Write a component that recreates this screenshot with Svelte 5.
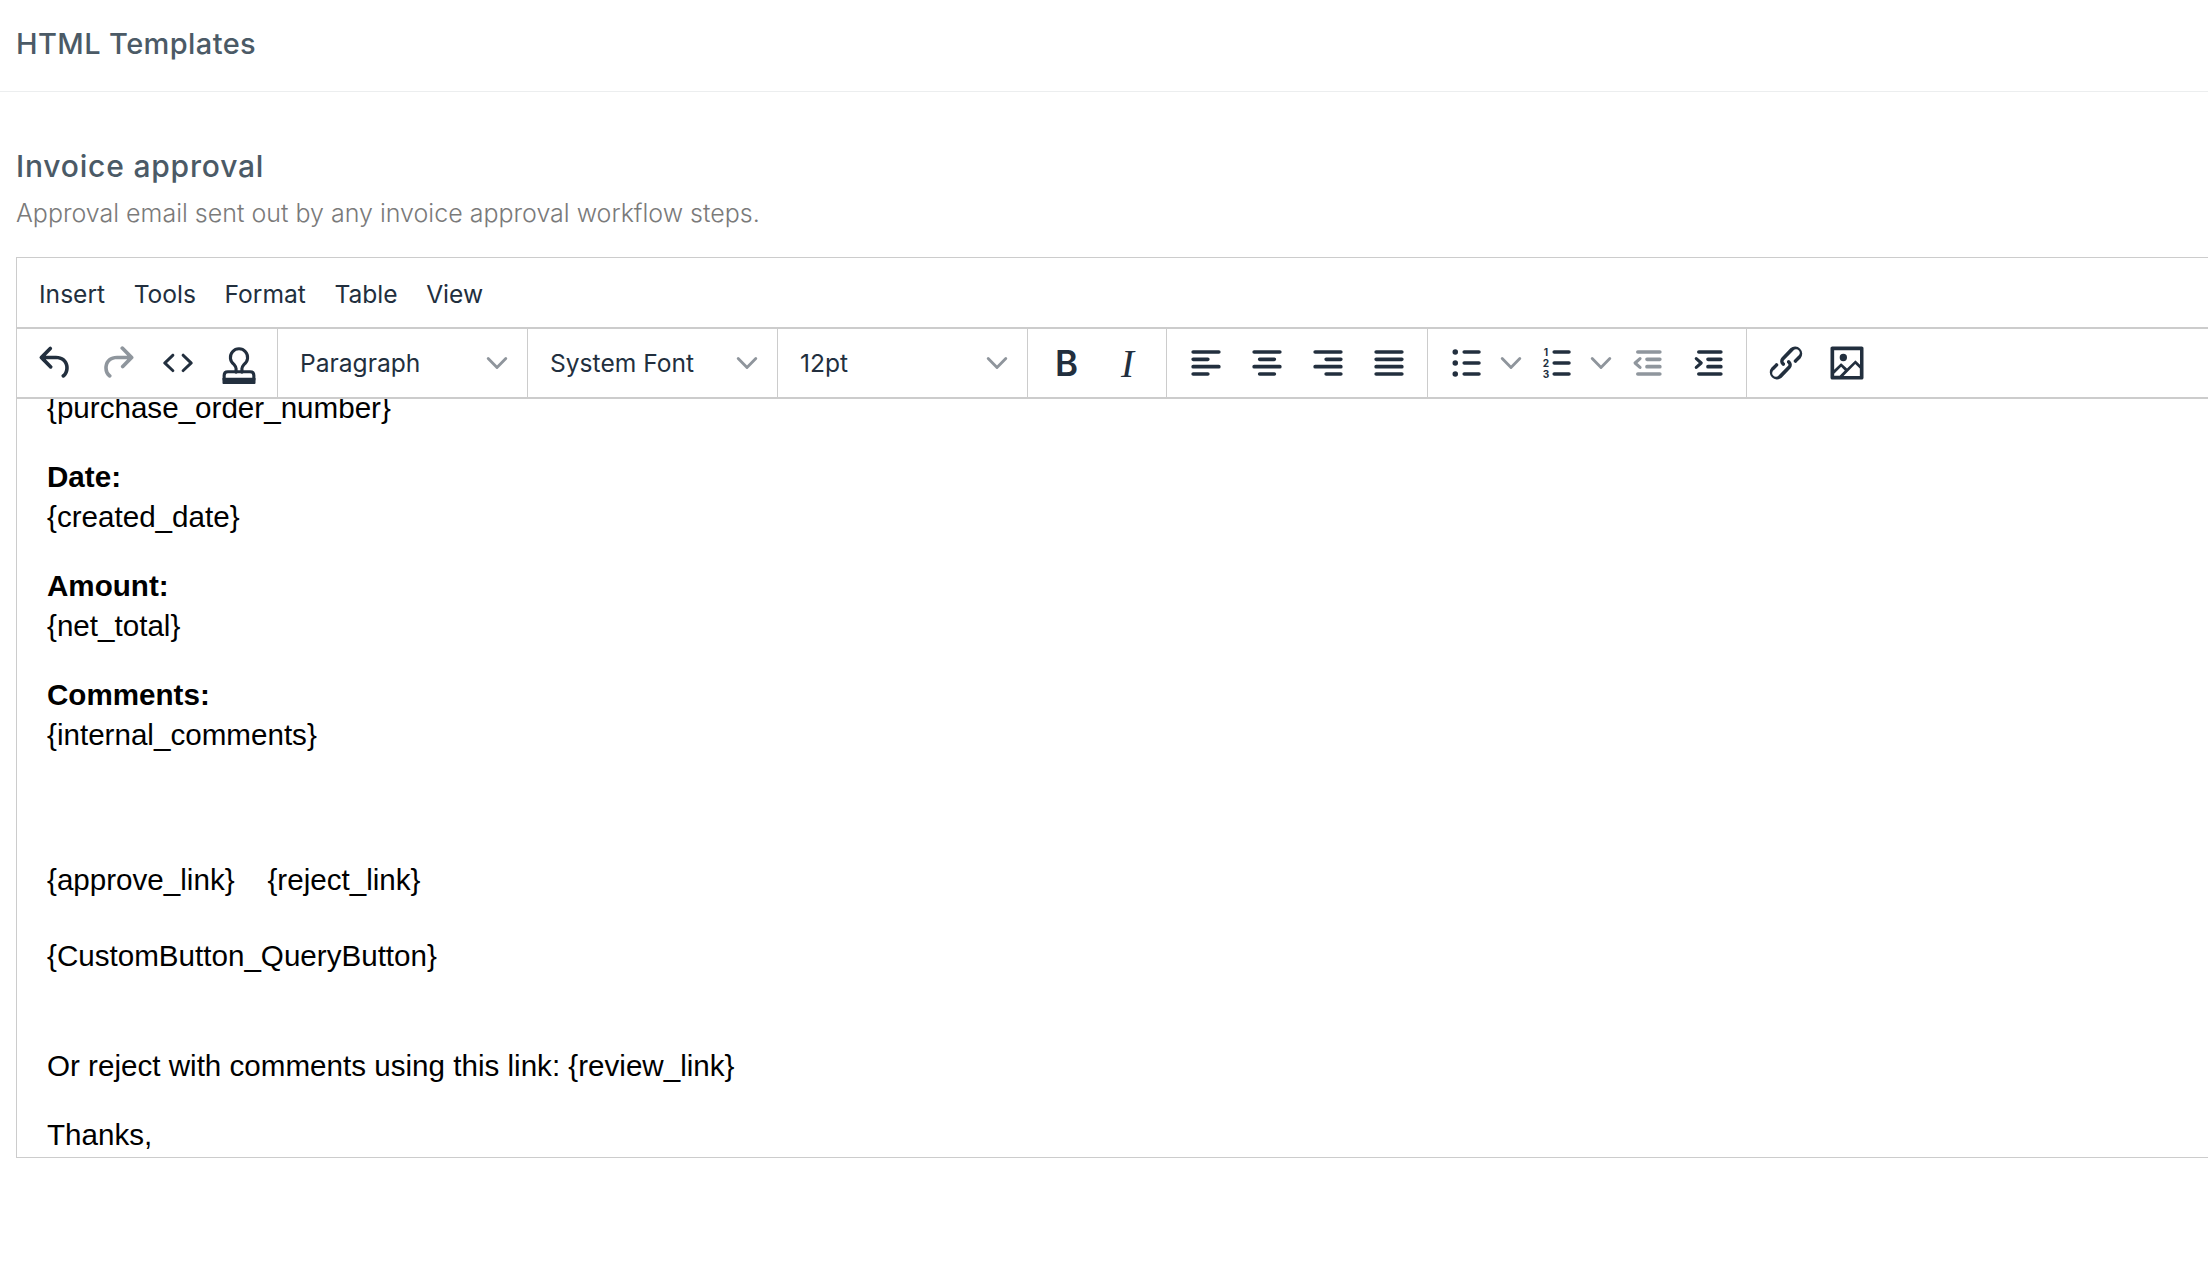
<script>
  const menus = ['Insert', 'Tools', 'Format', 'Table', 'View'];
  const selects = ['Paragraph', 'System Font', '12pt'];
</script>

{#snippet chevron()}
  <svg class="chev" viewBox="0 0 10 10"><path d="M1 3l4 4 4-4" /></svg>
{/snippet}

<main>
  <header class="top"><h1>HTML Templates</h1></header>

  <section class="panel">
    <h2>Invoice approval</h2>
    <p class="desc">Approval email sent out by any invoice approval workflow steps.</p>

    <div class="editor">
      <div class="menubar">
        {#each menus as m}
          <span class="menu">{m}</span>
        {/each}
      </div>

      <div class="toolbar">
        <div class="group">
          <button class="btn" aria-label="Undo"><svg viewBox="0 0 24 24"><path d="M6.4 8H12c3.7 0 6.2 2 6.8 5.1.6 2.7-.4 5.6-2.3 6.8a1 1 0 0 1-1-1.8c1.1-.6 1.8-2.7 1.4-4.6-.5-2.1-2.1-3.5-4.9-3.5H6.4l3.3 3.3a1 1 0 1 1-1.4 1.4l-5-5a1 1 0 0 1 0-1.4l5-5a1 1 0 0 1 1.4 1.4L6.4 8Z" /></svg></button>
          <button class="btn off" aria-label="Redo"><svg viewBox="0 0 24 24"><path d="M17.6 10H12c-2.8 0-4.4 1.4-4.9 3.5-.4 2 .3 4 1.4 4.6a1 1 0 1 1-1 1.8c-2-1.2-2.9-4.1-2.3-6.8.6-3 3-5.1 6.8-5.1h5.6l-3.3-3.3a1 1 0 1 1 1.4-1.4l5 5a1 1 0 0 1 0 1.4l-5 5a1 1 0 0 1-1.4-1.4l3.3-3.3Z" /></svg></button>
          <button class="btn" aria-label="Source code"><svg viewBox="0 0 24 24"><path d="M9.8 15.7c.3.3.3.8 0 1-.3.4-.9.4-1.2 0l-4.4-4.1a.8.8 0 0 1 0-1.2l4.4-4.2c.3-.3.9-.3 1.2 0 .3.3.3.8 0 1.1L6 12l3.8 3.7ZM14.2 15.7c-.3.3-.3.8 0 1 .4.4.9.4 1.2 0l4.4-4.1c.3-.3.3-.9 0-1.2l-4.4-4.2a.8.8 0 0 0-1.2 0c-.3.3-.3.8 0 1.1L18 12l-3.8 3.7Z" /></svg></button>
          <button class="btn" aria-label="Stamp"><svg viewBox="0 0 24 24"><path class="line" d="M10.400 17v-2c0-.9-.5-1.500-1.100-2.200a4.700 4.700 0 1 1 5.400 0c-.6.700-1.100 1.300-1.100 2.200v2M3.900 21v-2.200c0-1.200.8-2 2-2h12.200c1.200 0 2 .8 2 2V21" /><rect x="3" y="20" width="18" height="3.400" rx="0.500" /></svg></button>
        </div>

        {#each selects as s}
          <div class="select">
            <span>{s}</span>
            {@render chevron()}
          </div>
        {/each}

        <div class="group">
          <button class="btn glyph bold">B</button>
          <button class="btn glyph italic">I</button>
        </div>

        <div class="group">
          <button class="btn" aria-label="Align left"><svg viewBox="0 0 24 24"><path d="M5 5h14a1 1 0 0 1 0 2H5a1 1 0 1 1 0-2Zm0 4h8a1 1 0 0 1 0 2H5a1 1 0 1 1 0-2Zm0 8h8a1 1 0 0 1 0 2H5a1 1 0 0 1 0-2Zm0-4h14a1 1 0 0 1 0 2H5a1 1 0 0 1 0-2Z" /></svg></button>
          <button class="btn" aria-label="Align center"><svg viewBox="0 0 24 24"><path d="M5 5h14a1 1 0 0 1 0 2H5a1 1 0 1 1 0-2Zm3 4h8a1 1 0 0 1 0 2H8a1 1 0 1 1 0-2Zm0 8h8a1 1 0 0 1 0 2H8a1 1 0 0 1 0-2Zm-3-4h14a1 1 0 0 1 0 2H5a1 1 0 0 1 0-2Z" /></svg></button>
          <button class="btn" aria-label="Align right"><svg viewBox="0 0 24 24"><path d="M5 5h14a1 1 0 0 1 0 2H5a1 1 0 1 1 0-2Zm6 4h8a1 1 0 0 1 0 2h-8a1 1 0 0 1 0-2Zm0 8h8a1 1 0 0 1 0 2h-8a1 1 0 0 1 0-2Zm-6-4h14a1 1 0 0 1 0 2H5a1 1 0 0 1 0-2Z" /></svg></button>
          <button class="btn" aria-label="Justify"><svg viewBox="0 0 24 24"><path d="M5 5h14a1 1 0 0 1 0 2H5a1 1 0 1 1 0-2Zm0 4h14a1 1 0 0 1 0 2H5a1 1 0 1 1 0-2Zm0 4h14a1 1 0 0 1 0 2H5a1 1 0 0 1 0-2Zm0 4h14a1 1 0 0 1 0 2H5a1 1 0 0 1 0-2Z" /></svg></button>
        </div>

        <div class="group">
          <div class="split">
            <button class="btn" aria-label="Bullet list"><svg viewBox="0 0 24 24"><circle cx="5.600" cy="6" r="1.500" /><circle cx="5.600" cy="12" r="1.500" /><circle cx="5.600" cy="18" r="1.500" /><path d="M10.500 5h8a1 1 0 0 1 0 2h-8a1 1 0 0 1 0-2Zm0 6h8a1 1 0 0 1 0 2h-8a1 1 0 0 1 0-2Zm0 6h8a1 1 0 0 1 0 2h-8a1 1 0 0 1 0-2Z" /></svg></button>
            {@render chevron()}
          </div>
          <div class="split">
            <button class="btn" aria-label="Numbered list"><svg viewBox="0 0 24 24"><text x="6" y="8" class="num">1</text><text x="6" y="14" class="num">2</text><text x="6" y="20" class="num">3</text><path d="M10.500 5h8a1 1 0 0 1 0 2h-8a1 1 0 0 1 0-2Zm0 6h8a1 1 0 0 1 0 2h-8a1 1 0 0 1 0-2Zm0 6h8a1 1 0 0 1 0 2h-8a1 1 0 0 1 0-2Z" /></svg></button>
            {@render chevron()}
          </div>
          <button class="btn off" aria-label="Outdent"><svg viewBox="0 0 24 24"><path d="M7 5h12a1 1 0 0 1 0 2H7a1 1 0 1 1 0-2Zm5 4h7a1 1 0 0 1 0 2h-7a1 1 0 0 1 0-2Zm0 4h7a1 1 0 0 1 0 2h-7a1 1 0 0 1 0-2Zm-5 4h12a1 1 0 0 1 0 2H7a1 1 0 0 1 0-2Z" /><path class="line" d="M8.200 9.600l-2.700 2.400 2.700 2.400" /></svg></button>
          <button class="btn" aria-label="Indent"><svg viewBox="0 0 24 24"><path d="M7 5h12a1 1 0 0 1 0 2H7a1 1 0 1 1 0-2Zm5 4h7a1 1 0 0 1 0 2h-7a1 1 0 0 1 0-2Zm0 4h7a1 1 0 0 1 0 2h-7a1 1 0 0 1 0-2Zm-5 4h12a1 1 0 0 1 0 2H7a1 1 0 0 1 0-2Z" /><path class="line" d="M5.600 9.600l2.700 2.400-2.700 2.400" /></svg></button>
        </div>

        <div class="group last">
          <button class="btn" aria-label="Link"><svg viewBox="0 0 24 24"><path d="M6.200 12.300a1 1 0 0 1 1.400 1.400l-2 2a2 2 0 1 0 2.600 2.800l4.800-4.800a1 1 0 0 0 0-1.400 1 1 0 1 1 1.400-1.300 2.900 2.900 0 0 1 0 4L9.600 20a3.900 3.900 0 0 1-5.500-5.500l2-2Zm11.600-.6a1 1 0 0 1-1.400-1.400l2-2a2 2 0 1 0-2.600-2.800L11 10.300a1 1 0 0 0 0 1.400 1 1 0 1 1-1.400 1.300 2.900 2.900 0 0 1 0-4L14.400 4a3.900 3.900 0 0 1 5.500 5.500l-2 2Z" /></svg></button>
          <button class="btn" aria-label="Image"><svg viewBox="0 0 24 24"><path d="m5 15.700 3.300-3.200c.3-.3.7-.3 1 0L12 15l4.100-4c.3-.4.8-.4 1 0l2 1.900V5H5v10.700ZM5 18V19h3l2.800-2.900-2-2L5 17.900Zm14-3-2.500-2.400-6.400 6.500H19v-4ZM4 3h16c.6 0 1 .4 1 1v16c0 .6-.4 1-1 1H4a1 1 0 0 1-1-1V4c0-.6.4-1 1-1Zm6 8a2 2 0 1 0 0-4 2 2 0 0 0 0 4Z" /></svg></button>
        </div>
      </div>

      <div class="content">
        <p class="first">{'{purchase_order_number}'}</p>
        <p><b>Date:</b><br />{'{created_date}'}</p>
        <p><b>Amount:</b><br />{'{net_total}'}</p>
        <p><b>Comments:</b><br />{'{internal_comments}'}</p>
        <p class="links">{'{approve_link}'}&nbsp; &nbsp; {'{reject_link}'}</p>
        <p class="custom">{'{CustomButton_QueryButton}'}</p>
        <p class="reject">Or reject with comments using this link: {'{review_link}'}</p>
        <p>Thanks,</p>
      </div>
    </div>
  </section>
</main>

<style>
  :global(body) {
    background: #fff;
    overflow: hidden;
  }

  main {
    height: 1288px;
    overflow: hidden;
  }

  .top {
    height: 92px;
    box-sizing: border-box;
    border-bottom: 1px solid #eceeef;
    padding: 0 0 3px 16px;
    display: flex;
    align-items: center;
  }

  h1, h2 {
    margin: 0;
    color: #4b5a66;
    font-family: "Inter", sans-serif;
    font-weight: 500;
    font-size: 29px;
    line-height: 40px;
    letter-spacing: 0.4px;
  }

  h2 {
    font-size: 30px;
    letter-spacing: 0.8px;
  }

  .panel {
    padding: 54px 0 0 16px;
  }

  .desc {
    margin: 7px 0 0;
    color: #7a7a7a;
    font-family: "Inter", sans-serif;
    font-weight: 300;
    font-size: 25px;
    line-height: 40px;
  }

  .editor {
    margin-top: 24px;
    width: 2300px;
    height: 899px;
    border: 1px solid #ccc;
    display: flex;
    flex-direction: column;
    font-family: "Inter", sans-serif;
    color: #222f3e;
  }

  .menubar {
    height: 69px;
    display: flex;
    align-items: center;
    gap: 28.5px;
    padding: 2px 0 0 22px;
    box-sizing: border-box;
    font-size: 24.6px;
  }

  .toolbar {
    height: 68px;
    border-top: 2px solid #ccc;
    border-bottom: 2px solid #ccc;
    display: flex;
    flex-shrink: 0;
  }

  .group {
    display: flex;
    align-items: center;
    padding: 0 8px;
    border-right: 1px solid #ccc;
  }

  .group.last {
    border-right: 0;
  }

  .btn {
    width: 61px;
    height: 60px;
    padding: 0;
    border: 0;
    background: none;
    color: #222f3e;
    display: flex;
    align-items: center;
    justify-content: center;
  }

  .btn svg {
    width: 44px;
    height: 44px;
    fill: currentColor;
    overflow: visible;
  }

  .btn.off svg {
    opacity: 0.5;
  }

  .btn .line {
    fill: none;
    stroke: currentColor;
    stroke-width: 1.7;
    stroke-linecap: round;
    stroke-linejoin: round;
  }

  .glyph {
    line-height: 1;
  }

  .bold {
    font-family: "Inter", sans-serif;
    font-weight: 600;
    font-size: 35px;
  }

  .italic {
    font-family: "Liberation Serif", serif;
    font-style: italic;
    font-size: 39px;
  }

  .select {
    width: 250px;
    box-sizing: border-box;
    padding: 0 19px 0 22px;
    border-right: 1px solid #ccc;
    display: flex;
    align-items: center;
    justify-content: space-between;
    font-size: 24.6px;
  }

  .split {
    display: flex;
    align-items: center;
  }

  .chev {
    width: 22px;
    height: 22px;
    fill: none;
    stroke: #8f959c;
    stroke-width: 1.3;
    stroke-linecap: round;
    stroke-linejoin: round;
  }

  .split .chev {
    margin: 0 4px 0 3px;
  }

  .num {
    font-family: "Inter", sans-serif;
    font-weight: 700;
    font-size: 5.5px;
    text-anchor: middle;
  }

  .content {
    flex: 1;
    overflow: hidden;
    padding: 0 30px;
    color: #000;
    font-family: "Liberation Sans", sans-serif;
    font-size: 29.6px;
    line-height: 40px;
  }

  .content p {
    margin: 0 0 29px;
  }

  .content .first {
    margin-top: -11px;
  }

  .links {
    padding-top: 76px;
  }

  .custom {
    padding-top: 7px;
  }

  .reject {
    padding-top: 41px;
  }
</style>
